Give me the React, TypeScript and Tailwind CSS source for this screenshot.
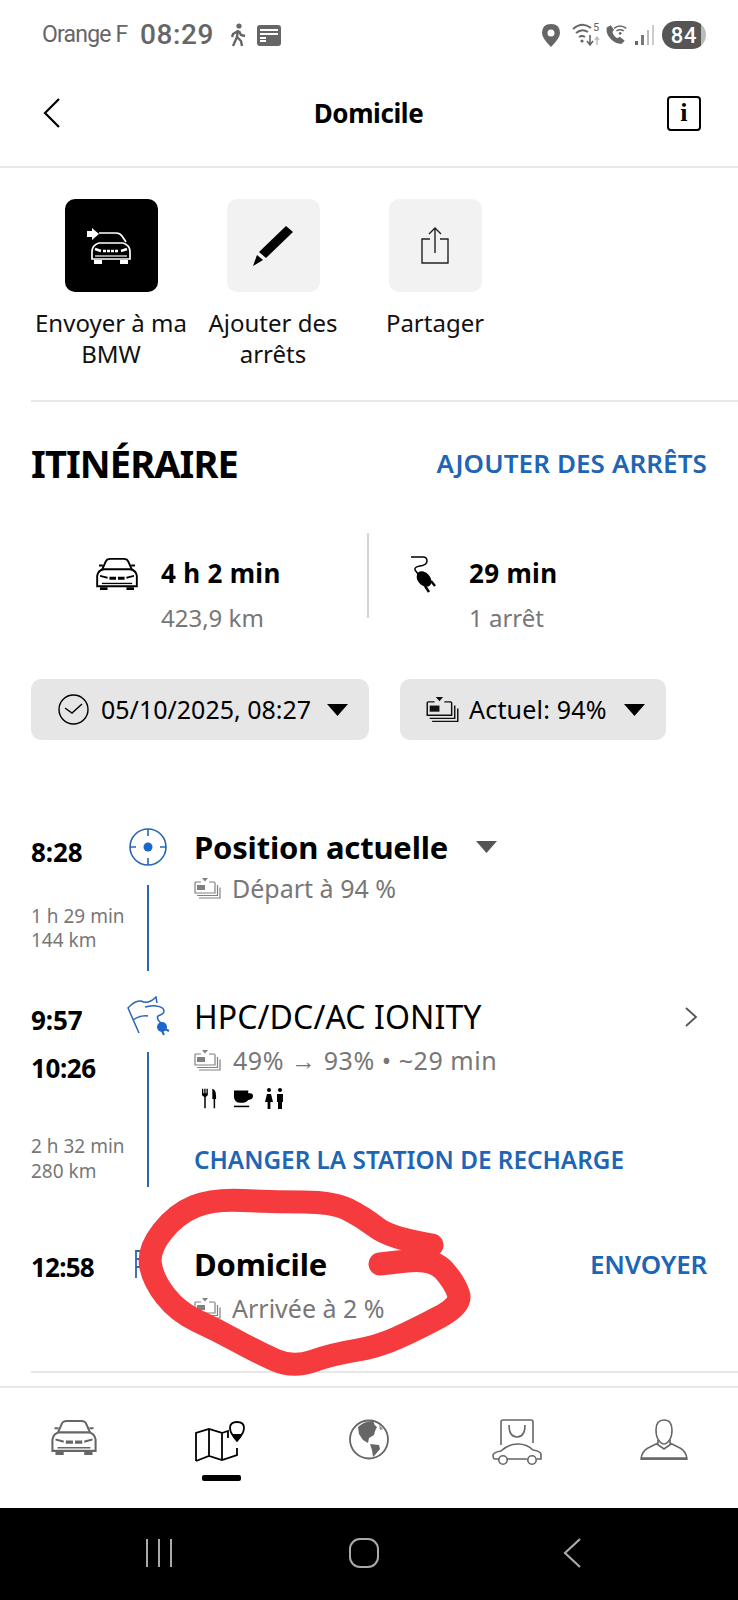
import React from "react";

const F = "font-['Noto_Sans',sans-serif]";

function CarFront({ w = 46, h = 34, color = "#000", fill = "#fff" }: { w?: number; h?: number; color?: string; fill?: string }) {
  return (
    <svg width={w} height={h} viewBox="0 0 48 36" fill="none" stroke={color} strokeWidth="2">
      <path d="M8 14 L12 5 Q13 2 17 2 H31 Q35 2 36 5 L40 14" />
      <path d="M3 20 Q4 14 10 13 H38 Q44 14 45 20 V31 H3 Z" fill={fill} />
      <path d="M5 9 h4 M39 9 h4" />
      <path d="M6 32 h8 v3 h-8z M34 32 h8 v3 h-8z" fill={color} stroke="none" />
      <path d="M6 19 l8 2 v2 l-8 -2z M42 19 l-8 2 v2 l8 -2z" fill={color} stroke="none" />
      <path d="M16 21 h7 v3 h-7z M25 21 h7 v3 h-7z" fill={color} stroke="none" />
      <path d="M8 28 H40" strokeWidth="1.4" />
    </svg>
  );
}

function Battery({ color = "#808080", w = 27 }: { color?: string; w?: number }) {
  return (
    <svg width={w} height={(w * 21) / 27} viewBox="0 0 27 21" fill="none" stroke={color} strokeWidth="1.2">
      <path d="M7 4 H2 Q1 4 1 5 V15 H21 V5 Q21 4 20 4 H15" />
      <rect x="3" y="7" width="8" height="5" fill={color} stroke="none" />
      <path d="M8 0 H14 L11 3.4 Z" fill={color} stroke="none" />
      <path d="M3 17.5 H23.5 V7 M5 20 H26 V9.5" />
    </svg>
  );
}

function Plug({ color = "#000" }: { color?: string }) {
  return (
    <svg width="28" height="40" viewBox="0 0 28 40" fill="none" stroke={color} strokeWidth="1.5">
      <path d="M1 2 H13 Q17 2 17 6 Q17 10 10 11 Q4 12 5 15 L8 19" />
      <ellipse cx="14" cy="24" rx="8" ry="5.5" transform="rotate(50 14 24)" fill={color} />
      <path d="M21 26 L25 31 M15 31 L19 37" strokeWidth="2.4" />
    </svg>
  );
}

function Caret({ w = 21, h = 12, color = "#000" }: { w?: number; h?: number; color?: string }) {
  return (
    <svg width={w} height={h} viewBox="0 0 22 12" preserveAspectRatio="none">
      <path d="M0 0 H22 L11 12 Z" fill={color} />
    </svg>
  );
}

function Wifi() {
  return (
    <svg width="30" height="30" viewBox="0 0 30 30" fill="none" stroke="#666" strokeWidth="2">
      <path d="M1 9 Q10 1 19 8 M4 13 Q10 8 16 12 M7 17 Q10 15 13 17" />
      <circle cx="10" cy="21" r="1.6" fill="#666" stroke="none" />
      <path d="M18 15 V24 M15 21 L18 25 L21 21" strokeWidth="1.6" />
      <path d="M25 25 V18 M23 20 L25 17 L27 20" stroke="#bbb" strokeWidth="1.4" />
      <text x="21" y="11" fontSize="11" fill="#666" stroke="none" fontFamily="Roboto, sans-serif">5</text>
    </svg>
  );
}

function PhoneWifi() {
  return (
    <svg width="23" height="24" viewBox="0 0 28 26">
      <path d="M7 1 L2 4 Q1 12 7 18 Q13 24 20 24 L24 20 L18 15 L15 17 Q10 14 9 9 L11 7 Z" fill="#666" />
      <path d="M11 5 Q18 -1 26 5 M14 8 Q18 5 23 8" fill="none" stroke="#666" strokeWidth="1.8" />
      <circle cx="18.5" cy="11" r="1.6" fill="#666" />
    </svg>
  );
}

function Signal() {
  return (
    <svg width="20" height="22" viewBox="0 0 20 22">
      <rect x="0" y="17" width="3" height="4" fill="#666" />
      <rect x="6" y="11" width="3" height="10" fill="#777" />
      <rect x="12" y="6" width="2" height="15" fill="#bbb" />
      <rect x="17" y="1" width="2" height="20" fill="#ccc" />
    </svg>
  );
}

function Walk() {
  return (
    <svg width="16" height="24" viewBox="0 0 16 24" fill="none" stroke="#666" strokeWidth="2.4">
      <circle cx="9" cy="3" r="2.6" fill="#666" stroke="none" />
      <path d="M8 7 L7 14 L3 23 M7 14 L11 18 L12 23 M8 8 L3 11 L2 14 M9 8 L11 12 L15 13" />
    </svg>
  );
}

function CardIcon() {
  return (
    <svg width="24" height="21" viewBox="0 0 24 21">
      <rect width="24" height="21" rx="3" fill="#666" />
      <path d="M3 5 H21 M3 9 H21" stroke="#fff" strokeWidth="2" />
      <path d="M3 13 H9 M3 16 H9" stroke="#fff" strokeWidth="2" />
    </svg>
  );
}

function Globe() {
  return (
    <svg width="40" height="41" viewBox="0 0 40 41">
      <circle cx="20" cy="20.5" r="19" fill="#fff" stroke="#666" strokeWidth="1.8" />
      <path d="M9 8 Q15 2 24 2 Q25 6 28 8 L26 12 L25 16 L20 19 L19 24 L14 21 L10 15 Z" fill="#666" />
      <path d="M21 25 L30 26 L31 30 L26 36 L24 38 L23 31 Z" fill="#666" />
      <path d="M30 6 L34 10 L31 11 Z" fill="#888" />
    </svg>
  );
}

function ShopCar() {
  return (
    <svg width="50" height="46" viewBox="0 0 50 46" fill="none" stroke="#666" strokeWidth="1.6">
      <path d="M9 26 V3 Q9 1 11 1 H39 Q41 1 41 3 V24" />
      <path d="M17 6 Q17 18 25 18 Q33 18 33 6" />
      <path d="M7 40 H3 Q1 40 1 36 Q2 33 9 32 Q16 25 26 25 Q35 25 41 31 Q48 32 49 35 V40 H45 M15 40 H35" />
      <circle cx="11" cy="41" r="4.2" />
      <circle cx="40" cy="41" r="4.2" />
    </svg>
  );
}

function Person() {
  return (
    <svg width="48" height="41" viewBox="0 0 48 41" fill="none" stroke="#666" strokeWidth="1.6">
      <path d="M24 1 Q16 1 16 11 Q16 19 20 23 Q24 27 28 23 Q32 19 32 11 Q32 1 24 1 Z" />
      <path d="M18 21 V24 L8 29 Q2 32 1 40 H47 Q46 32 40 29 L30 24 V21 M17 25 L24 30 L31 25" />
      <path d="M1 39.5 H47" strokeWidth="2.4" />
    </svg>
  );
}

function MapPin() {
  return (
    <svg width="52" height="42" viewBox="0 0 52 42" fill="none" stroke="#000" strokeWidth="1.8">
      <path d="M1 40 V12 L14 8 L27 12 V39 M1 40 L14 35 L27 39 L42 34 V27 M14 8 V35 M27 12 L33 10 V17" />
      <path d="M42 20 Q35 12 35 7 Q35 1 42 1 Q49 1 49 7 Q49 12 42 20 Z" fill="#fff" />
      <path d="M37 13 H47 L42 20 Z" fill="#000" stroke="none" />
    </svg>
  );
}

function Target() {
  return (
    <svg width="38" height="38" viewBox="0 0 38 38" fill="none" stroke="#2a66b3" strokeWidth="1.6">
      <circle cx="19" cy="19" r="18" />
      <path d="M19 1 V8 M19 30 V37 M1 19 H7 M31 19 H37" />
      <circle cx="19" cy="19" r="4.5" fill="#1a66cc" stroke="none" />
    </svg>
  );
}

function FlagPlug() {
  return (
    <svg width="44" height="40" viewBox="0 0 44 40" fill="none" stroke="#2a66b3" strokeWidth="1.5">
      <path d="M13 37 L2 12 Q9 4 15 5 Q22 9 30 1 L31 7" />
      <path d="M7 24 Q14 19 22 20" />
      <path d="M19 11 Q28 9 30 10 Q38 11 38 15 Q38 18 32 20 Q30 23 35 27" />
      <circle cx="36" cy="31" r="5" fill="#1a66cc" stroke="none" />
      <path d="M39 33 L43 35 M36 35 L38 39" strokeWidth="2" />
    </svg>
  );
}

function Flag() {
  return (
    <svg width="20" height="30" viewBox="0 0 20 30" fill="none" stroke="#2a66b3" strokeWidth="1.8">
      <path d="M2 29 V2 H18 V18 H2" />
      <path d="M10 2 V18 M2 10 H18" />
    </svg>
  );
}

function Food() {
  return (
    <div className="ml-[8px] flex items-center">
      <svg width="15" height="21" viewBox="0 0 16 21" fill="#000">
        <path d="M0 0 h1.4 v5 h1 V0 h1.4 v5 h1 V0 h1.4 v7 L4 9 V21 H2.4 V9 L0 7 Z" />
        <path d="M11 0 Q15 1 15 8 V11 H14 V21 H12.4 V11 H11 Z" />
      </svg>
      <svg width="20" height="20" viewBox="0 0 21 20" fill="#000" className="ml-[16px]">
        <path d="M1 1 H16 V4 H18 Q21 4 21 7 Q21 10 16 11 Q14 14 8 14 Q1 14 1 7 Z" />
        <rect x="1" y="17" width="16" height="1.6" />
      </svg>
      <svg width="19" height="21" viewBox="0 0 19 21" fill="#000" className="ml-[12px]">
        <circle cx="4" cy="2" r="2" />
        <circle cx="15" cy="2" r="2" />
        <path d="M2 6 H6 L8 14 H5.4 V21 H2.6 V14 H0 Z" />
        <path d="M12 6 H18 V14 H17 V21 H13 V14 H12 Z" />
      </svg>
    </div>
  );
}

const pts: [number, number][] = [
  [432, 1245], [390, 1238], [363, 1217], [333, 1202], [273, 1202], [213, 1199], [176, 1214], [148, 1250], [153, 1280],
  [178, 1312], [217, 1330], [257, 1352], [293, 1368], [333, 1354], [377, 1347], [417, 1329], [462, 1305], [455, 1283],
  [433, 1258], [380, 1264],
];

function scribble() {
  let d = `M${pts[0][0]} ${pts[0][1]}`;
  for (let i = 1; i < pts.length - 1; i++) {
    const mx = (pts[i][0] + pts[i + 1][0]) / 2;
    const my = (pts[i][1] + pts[i + 1][1]) / 2;
    d += ` Q${pts[i][0]} ${pts[i][1]} ${mx} ${my}`;
  }
  const l = pts[pts.length - 1];
  return d + ` L${l[0]} ${l[1]}`;
}

function Action({ label, dark, children }: { label: React.ReactNode; dark?: boolean; children: React.ReactNode }) {
  return (
    <div className="flex w-[162px] shrink-0 flex-col items-center">
      <div className={`flex h-[93px] w-[93px] items-center justify-center rounded-[10px] ${dark ? "bg-black" : "bg-[#f2f2f2]"}`}>
        {children}
      </div>
      <div className="mt-[15px] whitespace-nowrap text-center text-[24px] leading-[31px] text-[#111]">{label}</div>
    </div>
  );
}

export default function App() {
  return (
    <div className={`relative flex h-[1600px] w-[738px] flex-col overflow-hidden bg-white ${F}`}>
      {/* status bar */}
      <div className="flex h-[70px] shrink-0 items-center pl-[42px] pr-[32px] font-['Roboto',sans-serif] text-[#666]">
        <span className="w-[98px] whitespace-nowrap text-[23px] tracking-[-0.8px]">Orange F</span>
        <span className="w-[90px] text-[28px] font-medium tracking-[0.6px]">08:29</span>
        <Walk />
        <span className="ml-[11px]"><CardIcon /></span>
        <div className="ml-auto flex items-center">
          <svg width="18" height="23" viewBox="0 0 18 23" fill="#666">
            <path fillRule="evenodd" d="M9 0 Q18 0 18 9 Q18 14 9 23 Q0 14 0 9 Q0 0 9 0 Z M9 5.5 a3.5 3.5 0 1 0 0 7 a3.5 3.5 0 1 0 0 -7 Z" />
          </svg>
          <span className="ml-[12px]"><Wifi /></span>
          <span className="ml-[3px]"><PhoneWifi /></span>
          <span className="ml-[7px]"><Signal /></span>
          <div className="ml-[7px] flex h-[28px] w-[44px] items-center justify-center rounded-full bg-[linear-gradient(90deg,#555_88%,#bbb_88%)] text-[22px] font-medium tracking-[0.8px] text-white">84</div>
        </div>
      </div>

      {/* header */}
      <div className="flex h-[98px] shrink-0 items-center justify-between border-b-2 border-[#e8e8e8] pb-[10px] pl-[42px] pr-[37px]">
        <svg width="20" height="32" viewBox="0 0 20 32" fill="none" stroke="#000" strokeWidth="2.2"><path d="M17 2 L3 16 L17 30" /></svg>
        <span className="ml-[8px] text-[26px] font-bold tracking-[-0.4px] text-black">Domicile</span>
        <div className="flex h-[35px] w-[34px] items-center justify-center rounded-[4px] border-2 border-black font-['Liberation_Serif',serif] text-[26px] font-bold leading-none">i</div>
      </div>

      {/* actions */}
      <div className="ml-[31px] flex h-[234px] shrink-0 border-b-2 border-[#e8e8e8] pt-[31px]">
        <div className="-ml-[1px] flex">
          <Action dark label={<>Envoyer à ma<br />BMW</>}>
            <svg width="48" height="36" viewBox="0 0 48 36" fill="none" stroke="#fff" strokeWidth="1.7">
              <path d="M12 5 H29 Q33 5 35 8 L39 14" />
              <path d="M5 24 Q5 17 12 15 H36 Q43 17 43 24 V31 H5 Z" />
              <path d="M7 32 h8 v4 h-8z M33 32 h8 v4 h-8z" fill="#fff" stroke="none" />
              <path d="M8 21 l6 2 M40 21 l-6 2" strokeWidth="2.4" />
              <path d="M16 23 h16" strokeWidth="2.6" strokeDasharray="3 1" />
              <path d="M8 28 H40" strokeWidth="1.2" />
              <path d="M0 3 H5 V0 L12 6 L5 12 V9 H0 Z" fill="#fff" stroke="none" />
            </svg>
          </Action>
          <Action label={<>Ajouter des<br />arrêts</>}>
            <svg width="40" height="40" viewBox="0 0 40 40" fill="#000">
              <path d="M33 0 L40 6 L13 32 L6 26 Z" />
              <path d="M4 29 L10 34 L0 40 Z" />
            </svg>
          </Action>
          <Action label="Partager">
            <svg width="28" height="38" viewBox="0 0 28 38" fill="none" stroke="#222" strokeWidth="1.4">
              <path d="M9 12 H1 V36 H27 V12 H19 M14 26 V2 M8 7 L14 1 L20 7" />
            </svg>
          </Action>
        </div>
      </div>

      {/* itinerary title */}
      <div className="flex h-[118px] shrink-0 items-center justify-between px-[31px] pt-[4px]">
        <span className="text-[38px] font-bold tracking-[-0.9px] text-black">ITINÉRAIRE</span>
        <span className="text-[26px] font-semibold tracking-[0.1px] text-[#1e65b5]">AJOUTER DES ARRÊTS</span>
      </div>

      {/* stats */}
      <div className="mt-[13px] flex h-[85px] shrink-0 pl-[94px]">
        <div className="flex w-[275px] border-r-2 border-[#d4d4d4]">
          <div className="mt-[24px]"><CarFront /></div>
          <div className="ml-[21px] mt-[19px] whitespace-nowrap">
            <div className="text-[26px] font-bold leading-[42px] tracking-[0.3px] text-black">4 h 2 min</div>
            <div className="mt-[10px] text-[24px] leading-[28px] text-[#777]">423,9 km</div>
          </div>
        </div>
        <div className="ml-[41px] mt-[22px]"><Plug /></div>
        <div className="ml-[31px] mt-[19px] whitespace-nowrap">
          <div className="text-[26px] font-bold leading-[42px] tracking-[0.3px] text-black">29 min</div>
          <div className="mt-[10px] text-[24px] leading-[28px] text-[#777]">1 arrêt</div>
        </div>
      </div>

      {/* selectors */}
      <div className="mt-[61px] flex h-[61px] shrink-0 gap-[31px] pl-[31px]">
        <div className="flex w-[338px] items-center rounded-[10px] bg-[#e6e6e6] pl-[27px] text-[25px] text-black">
          <svg width="31" height="31" viewBox="0 0 31 31" fill="none" stroke="#000" strokeWidth="1.4">
            <circle cx="15.5" cy="15.5" r="14.5" />
            <path d="M7 14 L14 19 L24 10" />
          </svg>
          <span className="ml-[12px] w-[226px] whitespace-nowrap">05/10/2025, 08:27</span>
          <Caret />
        </div>
        <div className="flex w-[266px] items-center rounded-[10px] bg-[#e6e6e6] pl-[26px] text-[25px] tracking-[0.2px] text-black">
          <Battery color="#111" w={33} />
          <span className="ml-[10px] w-[155px] whitespace-nowrap">Actuel: 94%</span>
          <Caret />
        </div>
      </div>

      {/* timeline */}
      <div className="mt-[88px] flex h-[168px] shrink-0 pl-[31px]">
        <div className="w-[98px] whitespace-nowrap">
          <div className="mt-[9px] text-[26px] font-bold leading-[30px] tracking-[-0.1px] text-black">8:28</div>
          <div className="mt-[37px] text-[19px] leading-[24px] text-[#777]">1 h 29 min<br />144 km</div>
        </div>
        <div className="flex w-[38px] flex-col items-center">
          <Target />
          <div className="mt-[19px] h-[86px] w-[2px] bg-[#2a66b3]" />
        </div>
        <div className="ml-[27px] flex-1">
          <div className="-mt-[2px] flex items-center">
            <span className="text-[31px] font-bold leading-[42px] tracking-[-0.2px] text-black">Position actuelle</span>
            <span className="ml-[28px]"><Caret color="#555" /></span>
          </div>
          <div className="mt-[0px] flex items-center text-[25px] leading-[40px] text-[#777]">
            <Battery />
            <span className="ml-[11px]">Départ à 94 %</span>
          </div>
        </div>
      </div>

      <div className="flex h-[228px] shrink-0 pl-[31px]">
        <div className="w-[90px] whitespace-nowrap">
          <div className="mt-[9px] text-[26px] font-bold leading-[30px] tracking-[-0.1px] text-black">9:57</div>
          <div className="mt-[18px] text-[26px] font-bold leading-[30px] tracking-[-0.4px] text-black">10:26</div>
          <div className="mt-[51px] text-[19px] leading-[25px] text-[#777]">2 h 32 min<br />280 km</div>
        </div>
        <div className="flex w-[54px] flex-col items-center">
          <FlagPlug />
          <div className="mt-[16px] h-[135px] w-[2px] bg-[#2a66b3]" />
        </div>
        <div className="ml-[19px] flex-1 pr-[31px]">
          <div className="flex items-center justify-between">
            <span className="text-[32px] leading-[42px] tracking-[0.1px] text-black">HPC/DC/AC IONITY</span>
            <svg width="14" height="22" viewBox="0 0 14 22" fill="none" stroke="#555" strokeWidth="1.8" className="mr-[9px]"><path d="M2 2 L12 11 L2 20" /></svg>
          </div>
          <div className="mt-[2px] flex items-center whitespace-nowrap text-[25px] leading-[40px] text-[#777]">
            <Battery />
            <span className="ml-[12px] tracking-[0.55px]">49% → 93% • ~29 min</span>
          </div>
          <div className="mt-[8px]"><Food /></div>
          <div className="mt-[36px] text-[24.3px] font-semibold leading-[30px] text-[#1e65b5]">CHANGER LA STATION DE RECHARGE</div>
        </div>
      </div>

      <div className="ml-[31px] flex h-[149px] shrink-0 border-b-2 border-[#e8e8e8]">
        <div className="w-[103px]">
          <div className="mt-[28px] text-[26px] font-bold leading-[30px] tracking-[-0.8px] text-black">12:58</div>
        </div>
        <div className="mt-[25px] w-[60px]"><Flag /></div>
        <div className="flex-1 pr-[31px]">
          <div className="mt-[19px] flex items-center justify-between">
            <span className="text-[31px] font-bold leading-[42px] tracking-[-0.2px] text-black">Domicile</span>
            <span className="text-[26px] font-semibold tracking-[-0.2px] text-[#1e65b5]">ENVOYER</span>
          </div>
          <div className="mt-[3px] flex items-center text-[25px] leading-[40px] text-[#777]">
            <Battery />
            <span className="ml-[11px]">Arrivée à 2 %</span>
          </div>
        </div>
      </div>

      {/* bottom nav */}
      <div className="mt-[13px] grid h-[122px] shrink-0 grid-cols-5 border-t-2 border-[#e8e8e8]">
        <div className="flex items-start justify-center pt-[31px]"><CarFront w={50} h={37} color="#666" /></div>
        <div className="flex flex-col items-center pt-[33px]">
          <MapPin />
          <div className="mt-[12px] h-[6px] w-[39px] rounded-[2px] bg-black" />
        </div>
        <div className="flex items-start justify-center pt-[31px]"><Globe /></div>
        <div className="flex items-start justify-center pt-[31px]"><ShopCar /></div>
        <div className="flex items-start justify-center pt-[31px]"><Person /></div>
      </div>

      {/* android bar */}
      <div className="flex flex-1 items-center bg-black pb-[2px] pl-[146px]">
        <div className="flex gap-[10px]">
          <div className="h-[28px] w-[2px] bg-[#aaa]" />
          <div className="h-[28px] w-[2px] bg-[#aaa]" />
          <div className="h-[28px] w-[2px] bg-[#aaa]" />
        </div>
        <div className="ml-[177px] h-[30px] w-[30px] rounded-[11px] border-2 border-[#aaa]" />
        <svg width="20" height="30" viewBox="0 0 20 30" fill="none" stroke="#aaa" strokeWidth="2.2" className="ml-[183px]"><path d="M18 1 L3 15 L18 29" /></svg>
      </div>

      {/* hand-drawn scribble over the screenshot */}
      <svg className="pointer-events-none absolute left-0 top-0" width="738" height="1600" fill="none">
        <path d={scribble()} stroke="#f53b3d" strokeWidth="23" strokeLinecap="round" strokeLinejoin="round" />
      </svg>
    </div>
  );
}
